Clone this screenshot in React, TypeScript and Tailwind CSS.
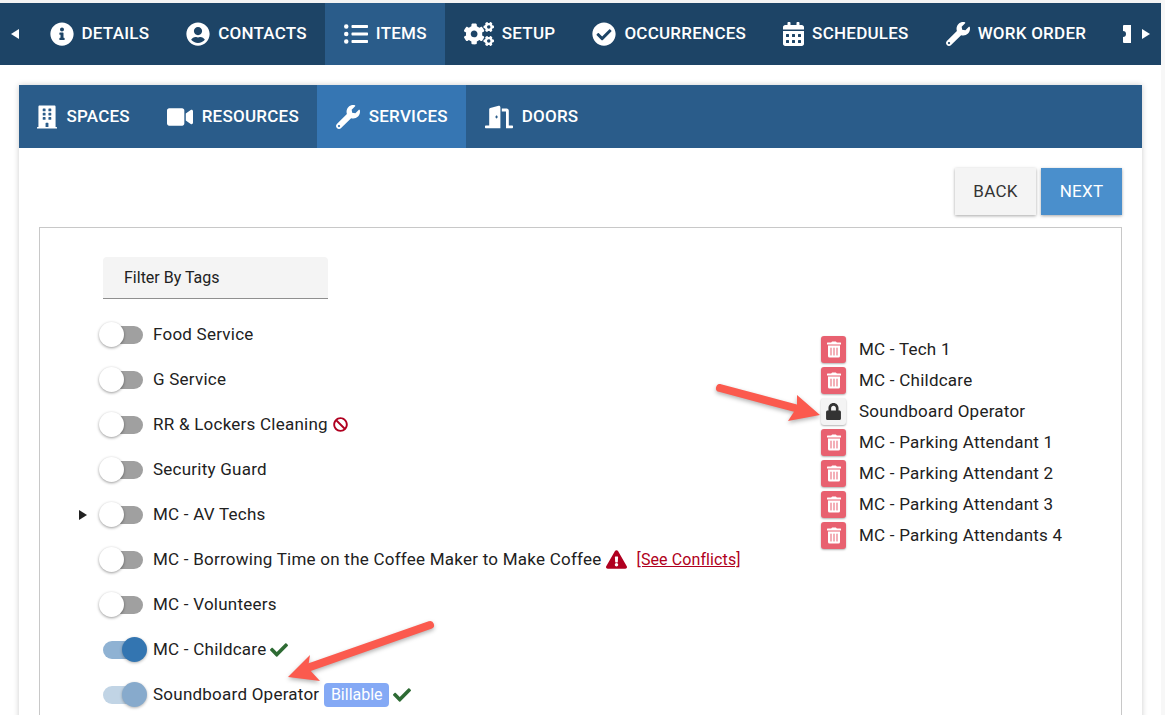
import { FaBan, FaBuilding, FaCalendarAlt, FaCheck, FaCheckCircle, FaCogs, FaDoorOpen, FaExclamationTriangle, FaInfoCircle, FaListUl, FaLock, FaTrashAlt, FaUserCircle, FaVideo, FaWrench } from 'react-icons/fa';
import type { IconType } from 'react-icons';
import type { ReactNode } from 'react';

const topTabs: { label: string; icon: IconType; iconSize: string; active?: boolean }[] = [
  { label: 'DETAILS', icon: FaInfoCircle, iconSize: 'w-[24px]' },
  { label: 'CONTACTS', icon: FaUserCircle, iconSize: 'w-[24px]' },
  { label: 'ITEMS', icon: FaListUl, iconSize: 'w-[24px]', active: true },
  { label: 'SETUP', icon: FaCogs, iconSize: 'w-[30px]' },
  { label: 'OCCURRENCES', icon: FaCheckCircle, iconSize: 'w-[24px]' },
  { label: 'SCHEDULES', icon: FaCalendarAlt, iconSize: 'w-[21px]' },
  { label: 'WORK ORDER', icon: FaWrench, iconSize: 'w-[24px]' },
];

const subTabs: { label: string; icon: IconType; iconSize: string; active?: boolean }[] = [
  { label: 'SPACES', icon: FaBuilding, iconSize: 'w-[20px]' },
  { label: 'RESOURCES', icon: FaVideo, iconSize: 'w-[26px]' },
  { label: 'SERVICES', icon: FaWrench, iconSize: 'w-[24px]', active: true },
  { label: 'DOORS', icon: FaDoorOpen, iconSize: 'w-[28px]' },
];

const assigned = [
  { name: 'MC - Tech 1' },
  { name: 'MC - Childcare' },
  { name: 'Soundboard Operator', locked: true },
  { name: 'MC - Parking Attendant 1' },
  { name: 'MC - Parking Attendant 2' },
  { name: 'MC - Parking Attendant 3' },
  { name: 'MC - Parking Attendants 4' },
];

function Toggle({ state = 'off' }: { state?: 'off' | 'on' | 'disabled' }) {
  if (state === 'off') {
    return (
      <div className="relative h-[18px] w-[40px] rounded-full bg-[#a0a0a0]">
        <div className="absolute left-[-4px] top-[-3.5px] size-[25px] rounded-full bg-white shadow-[0_1px_3px_rgba(0,0,0,0.4)]" />
      </div>
    );
  }
  return (
    <div className={`relative h-[18px] w-[40px] rounded-full ${state === 'on' ? 'bg-[#8fb2d3]' : 'bg-[#c1d4e5]'}`}>
      <div
        className={`absolute left-[19px] top-[-3.5px] size-[25px] rounded-full shadow-[0_1px_3px_rgba(0,0,0,0.3)] ${
          state === 'on' ? 'bg-[#3375b1]' : 'bg-[#87aacc]'
        }`}
      />
    </div>
  );
}

function ServiceRow({ label, state, caret, children }: { label: string; state?: 'off' | 'on' | 'disabled'; caret?: boolean; children?: ReactNode }) {
  return (
    <div className="relative flex h-[45px] items-center">
      {caret && <div className="absolute left-[-24px] size-0 border-y-[5px] border-l-[8px] border-y-transparent border-l-[#212121]" />}
      <Toggle state={state} />
      <span className="ml-[10px] whitespace-nowrap">{label}</span>
      {children}
    </div>
  );
}

export default function App() {
  return (
    <div className="relative h-[715px] w-[1165px] overflow-hidden bg-white pt-[3px] font-['Roboto',sans-serif] text-[17px] tracking-[0.24px] text-[#212121]">
      <div className="absolute inset-x-0 top-0 h-[3px] bg-[#f3f3f3]" />
      <div className="absolute inset-y-0 right-0 w-[4px] bg-[#f7f7f7]" />

      {/* Top tabs */}
      <div className="relative flex h-[62px] w-[1161px] items-center bg-[#1d4466] font-medium text-white">
        <div className="absolute left-[11px] size-0 border-y-[5px] border-r-[8px] border-y-transparent border-r-white" />
        <div className="ml-[31px] flex h-full w-[1100px] overflow-hidden">
          {topTabs.map(({ label, icon: Icon, iconSize, active }) => (
            <div key={label} className={`flex h-full shrink-0 items-center gap-[8px] px-[18.5px] ${active ? 'bg-[#2a5c8a]' : ''}`}>
              <Icon className={`h-[24px] shrink-0 ${iconSize}`} />
              <span>{label}</span>
            </div>
          ))}
          <div className="flex h-full shrink-0 items-center pl-[18px]">
            <svg width="24" height="18" viewBox="0 0 24 18" fill="currentColor">
              <path d="M1 0h22v18H1a1 1 0 0 1-1-1v-5a3 3 0 0 0 0-6V1a1 1 0 0 1 1-1z" />
            </svg>
          </div>
        </div>
        <div className="absolute left-[1142px] size-0 border-y-[5px] border-l-[8px] border-y-transparent border-l-white" />
      </div>

      {/* Card */}
      <div className="ml-[19px] mt-[20px] h-[700px] w-[1123px] bg-white shadow-[0_0_6px_rgba(0,0,0,0.2)]">
        <div className="flex h-[63px] bg-[#2a5c8a] font-medium text-white">
          {subTabs.map(({ label, icon: Icon, iconSize, active }) => (
            <div key={label} className={`flex h-full items-center gap-[9px] px-[18.4px] ${active ? 'bg-[#3676b3]' : ''}`}>
              <Icon className={`h-[24px] shrink-0 ${iconSize}`} />
              <span>{label}</span>
            </div>
          ))}
        </div>

        <div className="flex justify-end gap-[5px] pr-[20px] pt-[20px]">
          <button className="h-[47px] w-[81px] bg-[#f4f4f4] text-[#333] shadow-[0_1px_3px_rgba(0,0,0,0.35)]">BACK</button>
          <button className="h-[47px] w-[81px] bg-[#4a8fcc] text-white shadow-[0_1px_3px_rgba(0,0,0,0.35)]">NEXT</button>
        </div>

        {/* Services box */}
        <div className="ml-[20px] mt-[12px] flex h-[600px] w-[1083px] border border-[#c8c8c8] pl-[63px] pt-[29px]">
          <div className="w-[718px] shrink-0">
            <div className="flex h-[42px] w-[225px] items-center rounded-t-[4px] border-b border-[#8f8f8f] bg-[#f4f4f4] pl-[21px] text-[16px] tracking-normal">Filter By Tags</div>
            <div className="mt-[13px]">
              <ServiceRow label="Food Service" />
              <ServiceRow label="G Service" />
              <ServiceRow label="RR & Lockers Cleaning">
                <FaBan className="ml-[5px] size-[15px] text-[#b00020]" />
              </ServiceRow>
              <ServiceRow label="Security Guard" />
              <ServiceRow label="MC - AV Techs" caret />
              <ServiceRow label="MC - Borrowing Time on the Coffee Maker to Make Coffee">
                <FaExclamationTriangle className="ml-[4px] size-[21px] text-[#b00020]" />
                <span className="ml-[10px] text-[16px] tracking-[0.1px] text-[#b00020] underline">[See Conflicts]</span>
              </ServiceRow>
              <ServiceRow label="MC - Volunteers" />
              <ServiceRow label="MC - Childcare" state="on">
                <FaCheck className="ml-[4px] size-[18px] text-[#2e6b34]" />
              </ServiceRow>
              <ServiceRow label="Soundboard Operator" state="disabled">
                <span className="ml-[5px] rounded-[4px] bg-[#84a9f5] px-[6.5px] text-[16px] leading-[24px] tracking-normal text-white">Billable</span>
                <FaCheck className="ml-[4px] size-[18px] text-[#2e6b34]" />
              </ServiceRow>
            </div>
          </div>

          <div className="pt-[77px]">
            {assigned.map(({ name, locked }) => (
              <div key={name} className="flex h-[31px] items-center">
                <div
                  className={`flex h-[27px] w-[25px] items-center justify-center rounded-[3px] shadow-[0_1px_2px_rgba(0,0,0,0.3)] ${
                    locked ? 'bg-[#f4f4f4] text-[#333]' : 'bg-[#e86170] text-white'
                  }`}
                >
                  {locked ? <FaLock className="h-[17px] w-[15px]" /> : <FaTrashAlt className="h-[17px] w-[14px]" />}
                </div>
                <span className="ml-[13px] whitespace-nowrap">{name}</span>
              </div>
            ))}
          </div>
        </div>
      </div>

      {/* Annotation arrows */}
      <svg className="absolute left-0 top-0" width="1165" height="715" viewBox="0 0 1165 715" fill="none">
        <g style={{ filter: 'drop-shadow(0 2px 2px rgba(0,0,0,0.3))' }}>
          <line x1="720" y1="388" x2="795" y2="408" stroke="#fb5a4e" strokeWidth="8" strokeLinecap="round" />
          <polygon points="797,395 820,415 788,421 797,407" fill="#fb5a4e" />
          <line x1="430" y1="625" x2="310" y2="667" stroke="#fb5a4e" strokeWidth="8" strokeLinecap="round" />
          <polygon points="310,655 288,677 320,681 308,668" fill="#fb5a4e" />
        </g>
      </svg>
    </div>
  );
}
